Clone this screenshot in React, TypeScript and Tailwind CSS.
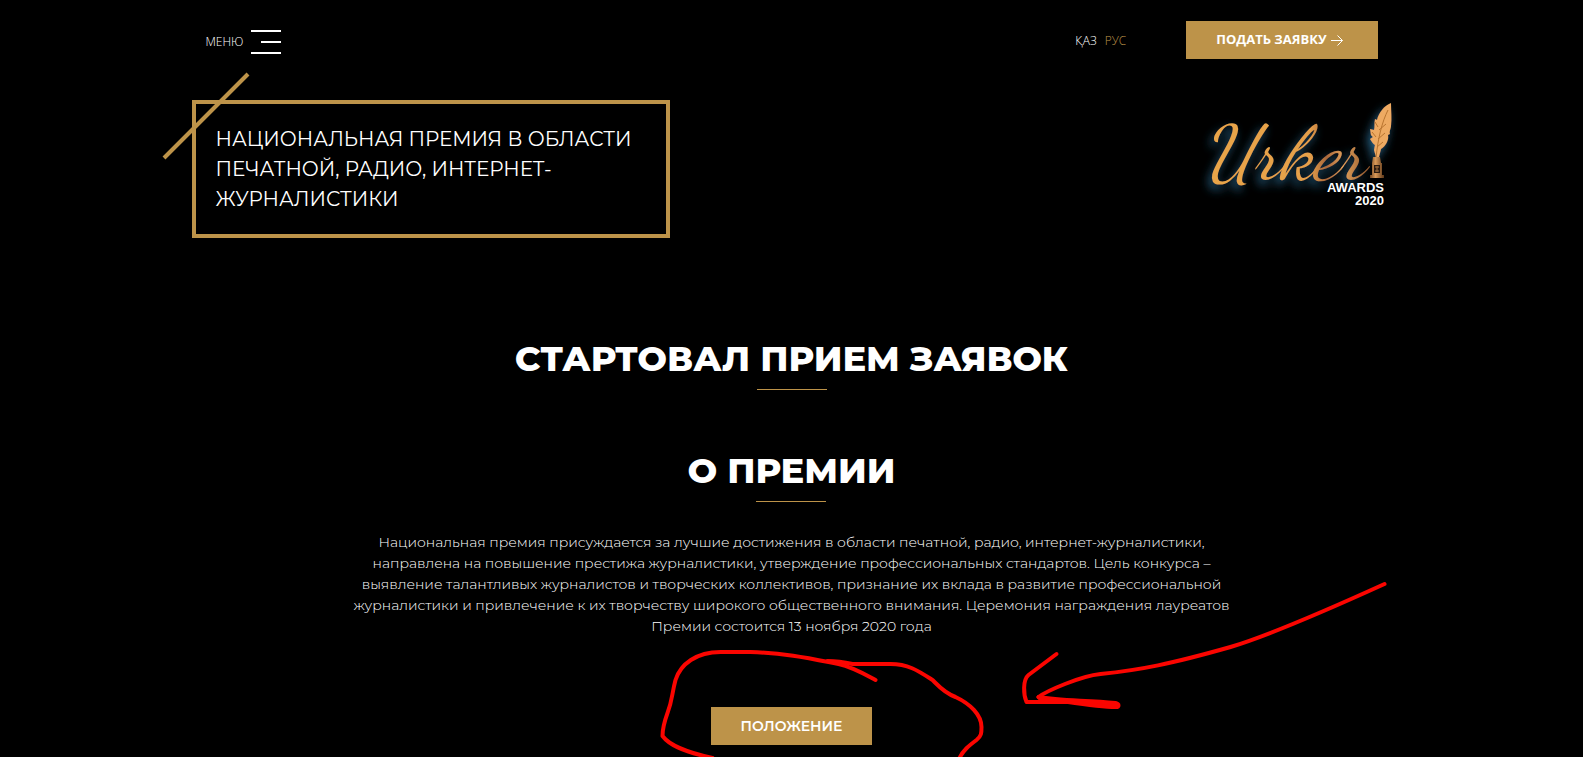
const paragraph = [
  'Национальная премия присуждается за лучшие достижения в области печатной, радио, интернет-журналистики,',
  'направлена на повышение престижа журналистики, утверждение профессиональных стандартов. Цель конкурса –',
  'выявление талантливых журналистов и творческих коллективов, признание их вклада в развитие профессиональной',
  'журналистики и привлечение к их творчеству широкого общественного внимания. Церемония награждения лауреатов',
  'Премии состоится 13 ноября 2020 года',
];

const ArrowIcon = () => (
  <svg width="12" height="12" viewBox="0 0 12 12" fill="none" stroke="currentColor" aria-hidden="true">
    <path d="M0 6.5h11.5M6.5 1.5l5 5-5 5" />
  </svg>
);

const UrkerLogo = () => (
  <svg
    className="shrink-0 overflow-visible"
    width="202"
    height="120"
    viewBox="1190 97 202 120"
    role="img"
    aria-label="Urker Awards 2020"
  >
    <defs>
      <linearGradient id="gold" x1="0" x2="1" y1="0" y2="0">
        <stop offset="0" stopColor="#e9a64a" />
        <stop offset="0.64" stopColor="#e5a04a" />
        <stop offset="0.74" stopColor="#a9683a" />
        <stop offset="0.84" stopColor="#e0a05a" />
        <stop offset="1" stopColor="#8a5228" />
      </linearGradient>
      <linearGradient id="base" x1="0" x2="1" y1="0" y2="0">
        <stop offset="0" stopColor="#6e4420" />
        <stop offset="0.4" stopColor="#d99a58" />
        <stop offset="1" stopColor="#5a3518" />
      </linearGradient>
      <filter id="glow" x="-20%" y="-30%" width="140%" height="160%">
        <feDropShadow dx="-3" dy="5" stdDeviation="5" floodColor="#2b6c92" floodOpacity="0.9" />
      </filter>
    </defs>
    <g filter="url(#glow)">
      <text
        x="1202"
        y="178"
        fill="url(#gold)"
        fontFamily="'Dancing Script', 'Great Vibes', 'Liberation Serif', serif"
        fontStyle="italic"
        fontSize="76"
      >
        Urker
      </text>
      <path
        d="M1391 103c-7 3-12 9-14 17l-2-1c-1 4 0 8-1 11l-4-1c1 4 0 6 3 8l-3 2c2 3 3 5 5 6l-1 5 2 7h3l2-8c5-3 8-9 7-14l2-1c-1-3 1-5 1-8 1-8 0-15 0-23z"
        fill="#eeaa62"
      />
    </g>
    <path
      d="M1388 110c-6 12-10 28-12 48M1378 127l-3-5M1376 137l-4-5M1379 130l7-6M1378 139l7-6M1377 147l6-5"
      stroke="#b8742f"
      strokeWidth="1"
      fill="none"
    />
    <path d="M1373 157h7l1 6h-9zM1372 163h10v12h-10zM1370 175h14v3h-14z" fill="url(#base)" />
    <path d="M1374 165h6v8h-6z" fill="#2a1b10" />
    <path d="M1375 167h4M1375 171h4M1377 166v6" stroke="#a3713c" />
    <g
      fill="#fff"
      fontFamily="'Liberation Sans', sans-serif"
      fontWeight="700"
      fontSize="13"
      textAnchor="end"
    >
      <text x="1384" y="192">
        AWARDS
      </text>
      <text x="1384" y="205">
        2020
      </text>
    </g>
  </svg>
);

const SectionTitle = ({ children }: { children: string }) => (
  <div className="flex flex-col items-center">
    <h2 className="text-[35px]/[54px] font-extrabold uppercase">{children}</h2>
    <span className="mt-[3px] h-px w-[70px] bg-[#bd9349]" />
  </div>
);

const Marker = () => (
  <svg
    className="pointer-events-none absolute top-0 left-1/2 -translate-x-1/2"
    width="1583"
    height="757"
    viewBox="0 0 1583 757"
    fill="none"
    stroke="#fb0500"
    strokeWidth="4"
    strokeLinecap="round"
    strokeLinejoin="round"
    aria-hidden="true"
  >
    <path d="M875 680C862 673 852 667 838 664C812 659 785 653 750 652H720C696 652 680 664 675 680C671 695 672 700 667 713C663 724 662 730 662 736C668 744 680 751 712 758" />
    <path d="M827 661C838 661 843 662 852 664H890C908 664 918 671 932 680C938 686 944 693 955 697C970 704 981 715 981 727C981 733 981 736 976 740C968 746 963 750 959 758" />
    <path d="M1384 584C1340 604 1270 635 1230 647C1170 664 1140 670 1100 674C1080 676 1046 691 1038 697" />
    <path d="M1056 654L1028 675C1022 680 1023 695 1026 702H1070" />
    <path d="M1038 697C1060 701 1085 700 1115 703C1119 704 1119 707 1115 707C1095 707 1070 702 1039 698z" fill="#fb0500" />
  </svg>
);

const App = () => {
  return (
    <div className="relative min-h-screen overflow-hidden bg-black font-['Montserrat','Inter',sans-serif] text-white">
      <header className="mx-auto flex max-w-[1200px] items-center justify-between px-[14px] pt-[21px] font-['Open_Sans',sans-serif]">
        <button type="button" className="flex items-center gap-2 pt-1 text-xs font-light">
          МЕНЮ
          <span className="flex flex-col items-end gap-[9px]">
            <span className="h-[2px] w-[30px] bg-white" />
            <span className="h-[2px] w-5 bg-white" />
            <span className="h-[2px] w-[30px] bg-white" />
          </span>
        </button>

        <div className="flex items-center gap-[60px]">
          <nav className="flex gap-2 pt-[2px] text-xs font-light">
            <a href="#kz">ҚАЗ</a>
            <a href="#ru" className="text-[#bd9349]">
              РУС
            </a>
          </nav>
          <a
            href="#apply"
            className="flex h-[38px] items-center gap-1 bg-[#bd9349] pr-[35px] pl-[30px] text-[13px] font-bold"
          >
            ПОДАТЬ ЗАЯВКУ <ArrowIcon />
          </a>
        </div>
      </header>

      <main>
        <section className="mx-auto mt-[38px] flex max-w-[1200px] items-start justify-between">
          <div className="relative mt-[3px] w-[478px] border-4 border-[#bd9349] p-5">
            <svg
              className="absolute -top-[33px] -left-[35px]"
              width="92"
              height="92"
              viewBox="0 0 92 92"
              stroke="#bd9349"
              strokeWidth="4"
              aria-hidden="true"
            >
              <path d="M3 87L87 3" />
            </svg>
            <h1 className="text-xl/[30px]">
              НАЦИОНАЛЬНАЯ ПРЕМИЯ В ОБЛАСТИ
              <br />
              ПЕЧАТНОЙ, РАДИО, ИНТЕРНЕТ-
              <br />
              ЖУРНАЛИСТИКИ
            </h1>
          </div>
          <UrkerLogo />
        </section>

        <section className="mt-[94px]">
          <SectionTitle>Стартовал прием заявок</SectionTitle>
        </section>

        <section className="mt-[54px] flex flex-col items-center">
          <SectionTitle>О премии</SectionTitle>
          <p className="mt-[30px] text-center text-sm/[21px] font-light">
            {paragraph.map((line) => (
              <span key={line} className="block">
                {line}
              </span>
            ))}
          </p>
          <a
            href="#regulations"
            className="mt-[70px] flex h-[38px] items-center bg-[#bd9349] px-[30px] text-sm font-semibold"
          >
            ПОЛОЖЕНИЕ
          </a>
        </section>
      </main>

      <Marker />
    </div>
  );
};

export default App;
